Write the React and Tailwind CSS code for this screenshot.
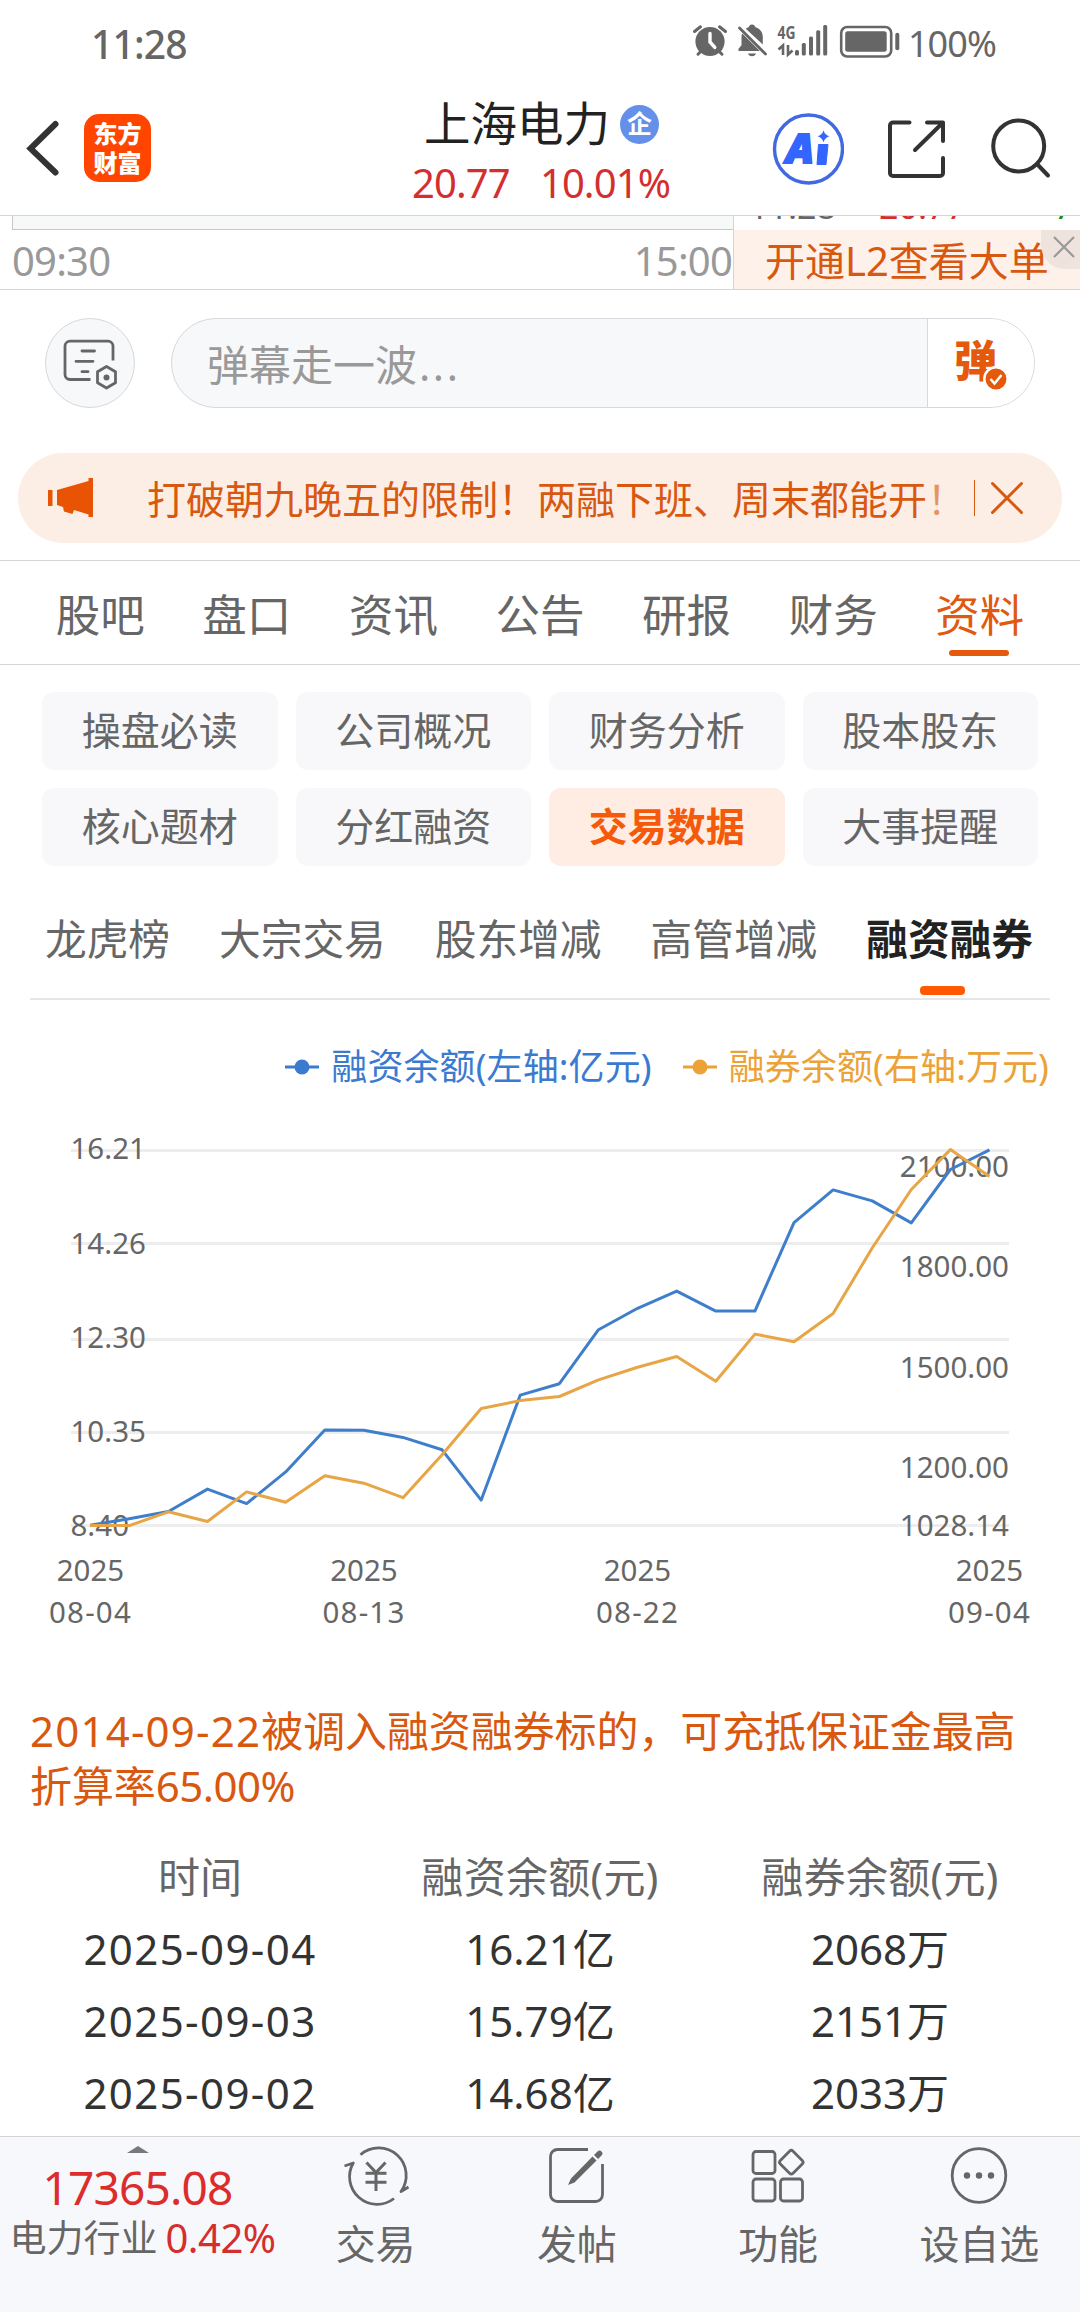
import React from "react";

const TABS = ["股吧", "盘口", "资讯", "公告", "研报", "财务", "资料"];
const CHIPS = ["操盘必读", "公司概况", "财务分析", "股本股东", "核心题材", "分红融资", "交易数据", "大事提醒"];
const SUB_TABS = ["龙虎榜", "大宗交易", "股东增减", "高管增减", "融资融券"];

const ROWS = [
  ["2025-09-04", "16.21亿", "2068万"],
  ["2025-09-03", "15.79亿", "2151万"],
  ["2025-09-02", "14.68亿", "2033万"],
];

// y offsets inside the chart svg, one per trading day
const RZ = [414.3, 407.7, 400.5, 378.1, 392.6, 360.9, 318.9, 319.2, 326.4, 338.8, 389.1, 284.1, 272.7, 218.7, 197.3, 180.1, 200.1, 200.1, 111.6, 78.9, 89.9, 111.9, 58.5, 38.9];
const RQ = [414.6, 414.6, 400.8, 410.5, 380.9, 391.2, 364.7, 372.2, 386.7, 343.7, 297.5, 289.6, 285.5, 268.9, 256.2, 245.5, 270.3, 223.1, 230.7, 202.5, 137, 78.5, 38.6, 65.4];
const toPoints = (ys) => ys.map((y, i) => `${(90.2 + i * 39.1).toFixed(1)},${y}`).join(" ");

const GRID = [39.5, 132.5, 228.5, 321.5, 414.5];
const LEFT = [["16.21", 47.5], ["14.26", 142.6], ["12.30", 236.9], ["10.35", 330.6], ["8.40", 424.6]];
const RIGHT = [["2100.00", 65.8], ["1800.00", 165.6], ["1500.00", 266.5], ["1200.00", 367], ["1028.14", 424.6]];
const DATES = [["08-04", 90.5], ["08-13", 364], ["08-22", 637.5], ["09-04", 989.5]];

function StatusBar() {
  return (
    <div className="h-[80px] pl-[91px] pr-[84px] pt-[7px] flex items-center justify-between text-[#666]">
      <span className="text-[39px] leading-[72px] tracking-[-0.8px] font-medium">11:28</span>
      <div className="flex items-center">
        <svg width="212" height="44" viewBox="0 0 212 44" className="mr-[4px] -mt-[4px]" fill="#666">
          <circle cx="18" cy="21.5" r="14.6" />
          <path d="M2.5 11.5 8.5 6.8M27.5 6.8l6 4.7M6 34.2l4-4M30 34.2l-4-4" stroke="#666" strokeWidth="3" strokeLinecap="round" />
          <path d="M18 13.5v8.5l4.8 5.4" stroke="#fff" strokeWidth="3.4" fill="none" strokeLinecap="round" />
          <path d="M60 4.5c1.7 0 3 1 3.2 2.4 4.6 1.4 7.6 5.2 7.6 10v7.5L53.8 8.7c.9-.8 2-1.4 3.1-1.8C57.2 5.5 58.3 4.5 60 4.5zM50.3 13.5 67.8 31H46.5v-2.2l3-3.6v-8.3c0-1.2.3-2.4.8-3.400zM56 33.5h8c-.5 1.7-2.1 2.8-4 2.8s-3.5-1.1-4-2.8z" />
          <path d="M47.5 8 73.5 34" stroke="#666" strokeWidth="2.8" strokeLinecap="round" />
          <text x="85.5" y="18.5" fontSize="18" fontWeight="700" textLength="18" lengthAdjust="spacingAndGlyphs">4G</text>
          <path d="M86.500 29.500 91 25.500V35M96 25v9.500l4.500-4" stroke="#666" strokeWidth="2.6" fill="none" />
          <rect x="103" y="30" width="4" height="5.5" rx="1.5" />
          <rect x="109.8" y="23" width="4" height="12.5" rx="1.5" />
          <rect x="117" y="16.5" width="4" height="19" rx="1.5" />
          <rect x="124.2" y="10.3" width="4" height="25.2" rx="1.5" />
          <rect x="131.2" y="5" width="4" height="30.5" rx="1.5" />
          <rect x="149.2" y="7" width="50" height="29.5" rx="6" fill="none" stroke="#666" strokeWidth="2.6" />
          <rect x="153.2" y="11.3" width="41.5" height="20.5" rx="2.5" />
          <rect x="203.3" y="12.8" width="4" height="17.5" rx="2" />
        </svg>
        <span className="text-[36px] leading-[72px] tracking-[-0.9px]">100%</span>
      </div>
    </div>
  );
}

function Header() {
  return (
    <div className="h-[136px] border-b border-[#d4d4d4] flex items-center">
      <svg width="40" height="60" viewBox="0 0 40 60" className="ml-[24px]">
        <path d="M31.5 6 6.5 30.5 31.5 54.5" fill="none" stroke="#333" strokeWidth="6" strokeLinecap="round" />
      </svg>
      <div className="ml-[20px] w-[67px] h-[68px] rounded-[15px] bg-[#ff4500] text-white font-black text-[24px] leading-[29px] flex flex-col items-center justify-center">
        <span>东方</span>
        <span>财富</span>
      </div>
      <div className="ml-[261px] w-[258px] h-[126px] flex flex-col">
        <div className="mt-[10px] ml-[12px] h-[56px] flex items-center">
          <span className="text-[46.5px] leading-[56px] text-[#222] whitespace-nowrap">上海电力</span>
          <span className="ml-[10px] mt-[3px] w-[39px] h-[39px] rounded-full bg-[#6490ea] text-white text-[25px] leading-[37px] font-bold text-center">企</span>
        </div>
        <div className="mt-[7px] h-[50px] flex justify-between text-[40px] leading-[50px] text-[#d32f2f] tracking-[-0.9px]">
          <span>20.77</span>
          <span>10.01%</span>
        </div>
      </div>
      <div className="ml-[102px] flex items-center">
        <svg width="72" height="72" viewBox="0 0 72 72" className="mt-[2px]">
          <circle cx="36.500" cy="36" r="34" fill="none" stroke="#4169e1" strokeWidth="3.4" />
          <text x="14" y="50" fontSize="41" fontWeight="900" fill="#3366ff" stroke="#3366ff" strokeWidth="2" fontStyle="italic" textLength="28" lengthAdjust="spacingAndGlyphs">A</text>
          <path d="M46.500 31.500h9.500l-2 20h-9z" fill="#3366ff" stroke="#3366ff" strokeLinejoin="round" />
          <path d="M51.5 17.500q1.500 4.500 6 5.700-4.500 1.300-6 6-1.500-4.700-6-6 4.500-1.200 6-5.700z" fill="#3366ff" />
        </svg>
        <svg width="64" height="64" viewBox="0 0 64 64" className="ml-[41px]" fill="none" stroke="#333" strokeWidth="4" strokeLinecap="round" strokeLinejoin="round">
          <path d="M24.500 6.500H8a3 3 0 0 0-3 3V57a3 3 0 0 0 3 3h47a3 3 0 0 0 3-3V42" />
          <path d="M42 6.500H58V25M57 7.500 30 34" />
        </svg>
        <svg width="64" height="64" viewBox="0 0 64 64" className="ml-[40px]" fill="none" stroke="#333" strokeWidth="4" strokeLinecap="round">
          <circle cx="29.7" cy="30" r="25.5" />
          <path d="m48.5 48.500 10.500 11" />
        </svg>
      </div>
    </div>
  );
}

function QuoteStrip() {
  return (
    <div className="h-[74px] border-b border-[#d4d4d4] flex">
      <div className="w-[734px] border-r border-[#d4d4d4] flex flex-col">
        <div className="ml-[12px] h-[14px] border-l border-b border-[#c8c8c8] bg-[#f7f8f8]" />
        <div className="flex justify-between pl-[12px] pr-[1px] text-[40px] leading-[62px] h-[59px] tracking-[-0.8px] text-[#999]">
          <span>09:30</span>
          <span>15:00</span>
        </div>
      </div>
      <div className="flex-1 relative">
        <div className="h-[14px] overflow-hidden flex items-end text-[34px] leading-[48px]">
          <span className="ml-[15px] w-[130px] text-[#666]">11:28</span>
          <span className="w-[175px] text-[#d32f2f]">20.77</span>
          <span className="text-[#1a8a1a]">7</span>
        </div>
        <div className="h-[59px] bg-[#fdf1ea] pl-[31px] text-[40px] leading-[62px] text-[#d9580f] whitespace-nowrap">开通L2查看大单</div>
        <div className="absolute right-0 top-[14px] w-[39px] h-[39px] rounded-bl-[24px] bg-[#ede2dc]/90 flex items-center justify-center">
          <svg width="26" height="26" viewBox="0 0 26 26" className="ml-[6px] -mt-[5px]">
            <path d="m3 3 20 20M23 3 3 23" stroke="#999" strokeWidth="2.2" />
          </svg>
        </div>
      </div>
    </div>
  );
}

function DanmuBar() {
  return (
    <div className="mt-[28px] px-[45px] h-[90px] flex items-center">
      <div className="w-[90px] h-[90px] rounded-full border border-[#d5d8dc] bg-[#f7f8fa]">
        <svg width="88" height="88" viewBox="0 0 88 88" className="-ml-[2px]" fill="none" stroke="#666" strokeWidth="2.8" strokeLinecap="round">
          <path d="M46.5 61.5H26a5 5 0 0 1-5-5V28.200a5 5 0 0 1 5-5h38a5 5 0 0 1 5 5V42.500" transform="translate(0 -1)" strokeLinecap="butt" />
          <path d="M38 32h12.500M32 42.300h17M38 52.700h6" />
          <path d="m62.500 47.500 9 5.300v11l-9 5.200-9-5.200v-11z" strokeLinejoin="round" />
          <circle cx="62.5" cy="58.500" r="3" fill="#666" stroke="none" />
        </svg>
      </div>
      <div className="ml-[36px] flex-1 h-[90px] rounded-full border border-[#d5d8dc] bg-[#f7f8fa] flex overflow-hidden">
        <div className="flex-1 pl-[35px] text-[42px] leading-[92px] text-[#999]">
          弹幕走一波<span className="tracking-[2.6px] ml-[2px]">...</span>
        </div>
        <div className="w-[107px] bg-white border-l border-[#d5d8dc] pl-[26px] relative">
          <span className="text-[43px] leading-[83px] font-black text-[#e5590c]">弹</span>
          <svg width="26" height="26" viewBox="0 0 26 26" className="absolute left-[55px] top-[47px]">
            <circle cx="13" cy="13" r="11.700" fill="#e5590c" stroke="#fff" strokeWidth="2.500" />
            <path d="m7.500 13 4 4.500L18.500 9" fill="none" stroke="#fff" strokeWidth="2.5" />
          </svg>
        </div>
      </div>
    </div>
  );
}

function Notice() {
  return (
    <div className="mt-[45px] mx-[18px] h-[90px] rounded-full bg-[#fceee5] flex items-center text-[#d9580f]">
      <svg width="48" height="44" viewBox="0 0 48 44" className="ml-[29px]" fill="#e85404">
        <path d="M1 14h4.500v16H1zM10 14 41.500 5V2H46v39h-4.500v-2.500L27 34l-1.500 4-8.500-2.500L16 31l-6-2z" />
      </svg>
      <div className="ml-[52px] w-[821px] text-[39px] leading-[87px] whitespace-nowrap">
        打破朝九晚五的限制！两融下班、周末都能开<span className="opacity-60">！</span>
      </div>
      <div className="ml-[6px] w-px h-[36px] bg-[#d9580f]" />
      <svg width="36" height="36" viewBox="0 0 36 36" className="ml-[14px]">
        <path d="m3.500 3.500 29 29M32.500 3.500l-29 29" stroke="#d9580f" strokeWidth="3" strokeLinecap="round" />
      </svg>
    </div>
  );
}

function Tabs() {
  return (
    <div className="mt-[17px] h-[105px] border-y border-[#d4d4d4] px-[27px] flex">
      {TABS.map((t, i) => {
        const on = i === TABS.length - 1;
        return (
          <div key={t} className={`flex-1 flex flex-col items-center text-[44.5px] leading-[107px] h-[103px] ${on ? "text-[#e0590f]" : "text-[#666]"}`}>
            <span className="h-[89px]">{t}</span>
            {on && <span className="-ml-[2px] w-[60px] h-[6px] rounded-full bg-[#e5590c]" />}
          </div>
        );
      })}
    </div>
  );
}

function SubNav() {
  return (
    <>
      <div className="mt-[27px] px-[42px] grid grid-cols-4 gap-[18px]">
        {CHIPS.map((c) => (
          <div
            key={c}
            className={`h-[78px] rounded-[12px] text-center text-[39px] leading-[76px] ${c === "交易数据" ? "bg-[#ffede3] text-[#f55a0a] font-bold" : "bg-[#f8f8fa] text-[#666]"}`}
          >
            {c}
          </div>
        ))}
      </div>
      <div className="mt-[38px] mx-[30px] h-[96px] border-b-2 border-[#e6e6e6] px-[15px] flex gap-[49px] text-[41.7px] leading-[70px] text-[#666] whitespace-nowrap">
        {SUB_TABS.map((t, i) => (
          <div key={t} className="flex flex-col items-center">
            <span className={i === 4 ? "font-bold text-[#222]" : ""}>{t}</span>
            {i === 4 && <span className="mt-[12px] -ml-[15px] w-[45px] h-[9px] rounded-[4px] bg-[#ff5a00]" />}
          </div>
        ))}
      </div>
    </>
  );
}

function LegendItem({ color, children }) {
  return (
    <div className="flex items-center" style={{ color }}>
      <svg width="34" height="16" viewBox="0 0 34 16" className="mr-[12px]">
        <path d="M0 8h34" stroke="currentColor" strokeWidth="3" />
        <circle cx="17" cy="8" r="7.5" fill="currentColor" />
      </svg>
      <span className="tracking-[0.1px]">{children}</span>
    </div>
  );
}

function Chart() {
  return (
    <div>
      <div className="mt-[40px] h-[54px] pr-[31px] flex justify-end gap-[31px] text-[36px] leading-[54px]">
        <LegendItem color="#3a7bd0">融资余额(左轴:亿元)</LegendItem>
        <LegendItem color="#eba237">融券余额(右轴:万元)</LegendItem>
      </div>
      <svg width="1080" height="560" viewBox="0 -17 1080 560" className="block" fontSize="29.5" fill="#666">
        {GRID.map((y) => <path key={y} d={`M71 ${y}H1009`} stroke="#ededed" strokeWidth="3" />)}
        {LEFT.map(([t, y]) => <text key={t} x="70.5" y={y}>{t}</text>)}
        {RIGHT.map(([t, y]) => <text key={t} x="1009" y={y} textAnchor="end">{t}</text>)}
        {DATES.map(([d, x]) => (
          <g key={d} textAnchor="middle">
            <text x={x} y="469.7">2025</text>
            <text x={x} y="511.7" letterSpacing="1.2">{d}</text>
          </g>
        ))}
        <polyline points={toPoints(RZ)} fill="none" stroke="#3f7ecb" strokeWidth="3" strokeLinejoin="round" />
        <polyline points={toPoints(RQ)} fill="none" stroke="#e8a545" strokeWidth="3" strokeLinejoin="round" />
      </svg>
    </div>
  );
}

function MarginTable() {
  return (
    <div className="px-[30px] text-[42px]">
      <p className="h-[110px] mt-[49px] leading-[55px] text-[#d9580f]">
        <span className="tracking-[1.2px]">2014-09-22</span><span className="tracking-[-0.1px]">被调入融资融券标的，可充抵保证金最高折算率</span><span className="tracking-[-0.5px]">65.00%</span>
      </p>
      <div className="mt-[28px] grid grid-cols-3 text-center leading-[72px] text-[#666]">
        <span>时间</span>
        <span className="tracking-[0.3px]">融资余额(元)</span>
        <span className="tracking-[0.3px]">融券余额(元)</span>
      </div>
      {ROWS.map(([date, rz, rq]) => (
        <div key={date} className="grid grid-cols-3 text-center leading-[72px] text-[#333]">
          <span className="tracking-[1.4px]">{date}</span>
          <span>{rz}</span>
          <span>{rq}</span>
        </div>
      ))}
    </div>
  );
}

function NavItem({ label, children }) {
  return (
    <div className="flex-1 flex flex-col items-center">
      <svg width="70" height="64" viewBox="0 0 70 64" className="mt-[7px]" fill="none" stroke="#666" strokeWidth="2.8">
        {children}
      </svg>
      <span className="mt-[6px] text-[40px] leading-[60px]">{label}</span>
    </div>
  );
}

function BottomBar() {
  return (
    <div className="absolute left-0 top-[2136px] w-full h-[176px] border-t border-[#d4d4d4] bg-[#f7f8fb] flex text-[#666]">
      <div className="w-[275px] flex flex-col items-center whitespace-nowrap">
        <svg width="22" height="7" viewBox="0 0 22 7" className="mt-[9px]"><path d="M0 7 11 0l11 7z" fill="#77787c" /></svg>
        <span className="mt-[4px] text-[46px] leading-[60px] tracking-[-0.8px] text-[#dc2c2c]">17365.08</span>
        <div className="mt-px flex items-center leading-[40px] pl-[10px]">
          <span className="text-[37px]">电力行业</span>
          <span className="ml-[8px] text-[40px] tracking-[-0.5px] text-[#d32f2f]">0.42%</span>
        </div>
      </div>
      <NavItem label="交易">
        <path d="M19.500 9.800A27.500 27.500 0 0 1 60 46.500l7.500-4.500M53 53.500A27.500 27.500 0 0 1 12.300 18L3.500 21" transform="translate(0 1)" strokeLinejoin="round" />
        <path d="m25.500 18.500 9.500 10 9.500-10M35 28v19M24.500 29.300h21M24.500 38.300h21" strokeWidth="3" />
      </NavItem>
      <NavItem label="发帖">
        <path d="M46 5.500H15.500a7 7 0 0 0-7 7v38a7 7 0 0 0 7 7h38a7 7 0 0 0 7-7V20" />
        <path d="m26 41 3-6.500L50.500 12.500l4 4-22 22zM52 11l3.500-3.500a2.500 2.500 0 0 1 4 4L56 15z" fill="#666" stroke="none" />
      </NavItem>
      <NavItem label="功能">
        <rect x="10" y="7.500" width="22" height="22" rx="3" />
        <rect x="10" y="35" width="22" height="22" rx="3" />
        <rect x="37.500" y="35" width="22" height="22" rx="3" />
        <rect x="39.300" y="9.200" width="18" height="18" rx="2.500" transform="rotate(45 48.300 18.200)" />
      </NavItem>
      <NavItem label="设自选">
        <circle cx="35" cy="31.500" r="26.800" />
        <g fill="#666" stroke="none">
          <circle cx="23" cy="31.500" r="3.200" />
          <circle cx="35" cy="31.500" r="3.200" />
          <circle cx="47" cy="31.500" r="3.200" />
        </g>
      </NavItem>
    </div>
  );
}

export default function App() {
  return (
    <div className="relative w-[1080px] h-[2312px] overflow-hidden bg-white font-['Noto_Sans','Noto_Sans_CJK_SC',sans-serif]">
      <StatusBar />
      <Header />
      <QuoteStrip />
      <DanmuBar />
      <Notice />
      <Tabs />
      <SubNav />
      <Chart />
      <MarginTable />
      <BottomBar />
    </div>
  );
}
